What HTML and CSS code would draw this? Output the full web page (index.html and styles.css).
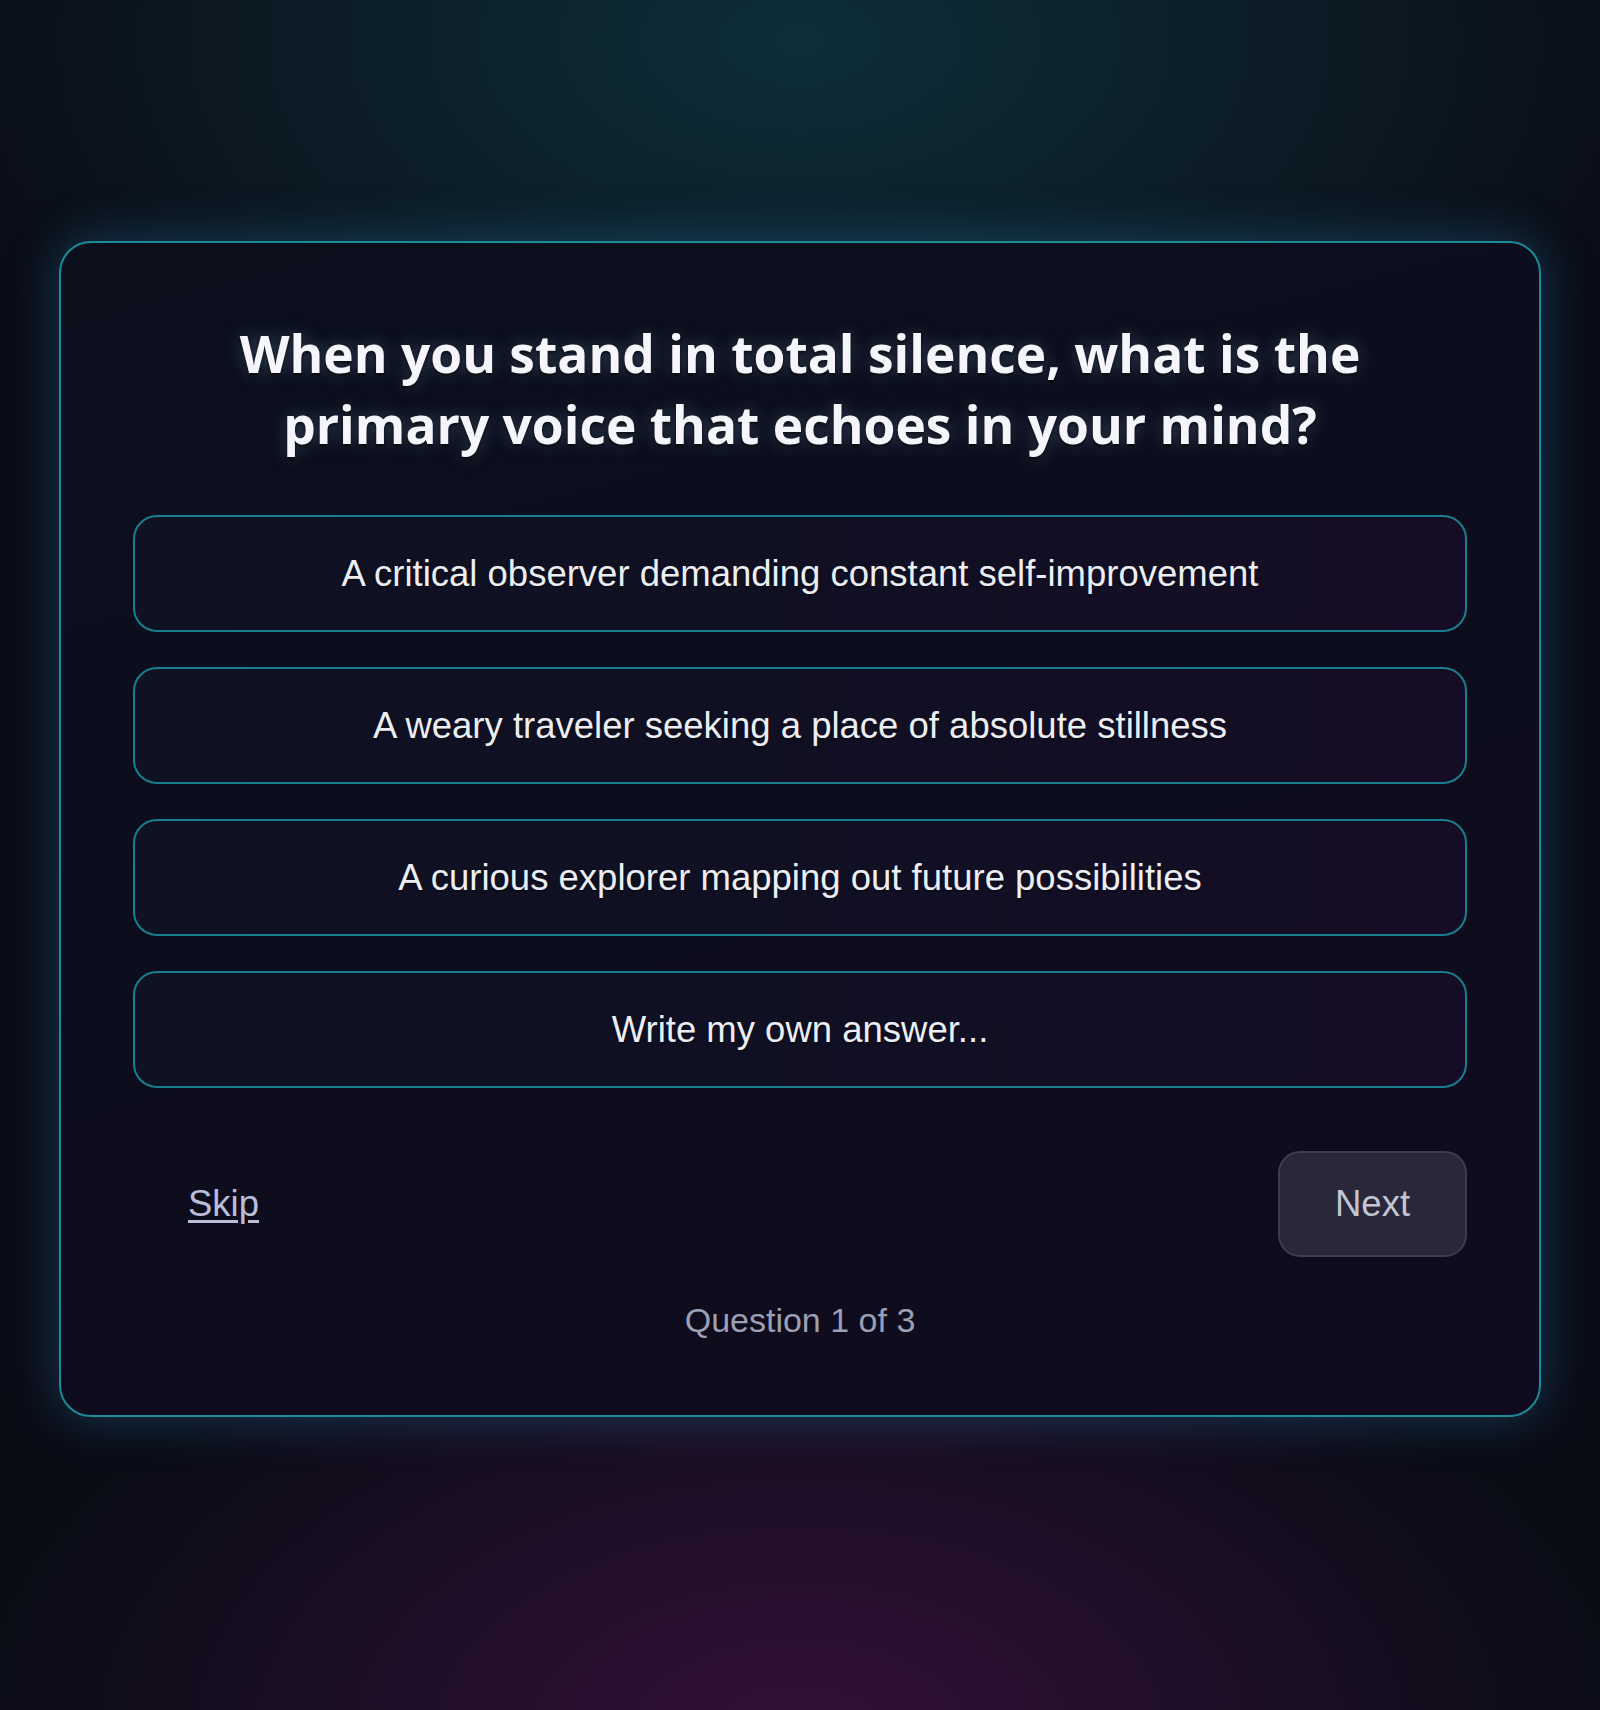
FILE: index.html
```html
<!DOCTYPE html>
<html lang="en">
<head>
  <meta charset="UTF-8" />
  <meta name="viewport" content="width=device-width, initial-scale=1.0"/>
  <title>Inner Voice - Question 1</title>

  <link rel="stylesheet" href="styles.css">

</head>
<body>
  <div class="quiz-card">
    <h1 class="question">When you stand in total silence, what is the primary voice that echoes in your mind?</h1>

    <div class="options">
      <button class="option">A critical observer demanding constant self-improvement</button>
      <button class="option">A weary traveler seeking a place of absolute stillness</button>
      <button class="option">A curious explorer mapping out future possibilities</button>
      <button class="option">Write my own answer...</button>
    </div>

    <div class="actions">
      <button class="skip">Skip</button>
      <button class="next">Next</button>
    </div>

    <p class="progress">Question <span id="current">1</span> of <span id="total">3</span></p>
  </div>
</body>
</html>
```

FILE: styles.css
```css
html, body {
  margin: 0;
  padding: 0;
}

body {
  min-height: 1710px;
  background:
    radial-gradient(ellipse 900px 520px at 50% 40px, rgba(14, 52, 62, 0.85), transparent),
    radial-gradient(ellipse 820px 480px at 50% 1740px, rgba(54, 16, 58, 0.95), transparent),
    #0a0c16;
  font-family: "Liberation Sans", Arial, sans-serif;
  color: #e6e8f2;
  padding: 241px 59px 0;
  box-sizing: border-box;
}

.quiz-card {
  background: linear-gradient(165deg, #0b0f1c 0%, #0c0d1c 50%, #100b1f 100%);
  border: 2px solid #1a8c99;
  border-radius: 32px;
  padding: 75px 72px 75px;
  box-shadow: 0 0 50px rgba(40, 120, 170, 0.42);
}

.question {
  font-family: "Open Sans", "Noto Sans", sans-serif;
  font-weight: 700;
  font-size: 51.5px;
  line-height: 71px;
  text-align: center;
  color: #f4f6fb;
  max-width: 1180px;
  margin: 0 auto 55px;
  text-shadow: 0 2px 3px rgba(0, 0, 0, 0.6), 0 0 18px rgba(170, 220, 255, 0.25);
}

.options {
  display: flex;
  flex-direction: column;
  gap: 35px;
}

.option {
  height: 117px;
  border: 2px solid #197f8c;
  border-radius: 24px;
  background: linear-gradient(100deg, #0e1222 0%, #110f23 60%, #150d25 100%);
  color: #eceef6;
  font-family: inherit;
  font-size: 36.5px;
  cursor: pointer;
  text-shadow: 0 1px 2px rgba(0, 0, 0, 0.6);
}

.actions {
  display: flex;
  justify-content: space-between;
  align-items: center;
  margin-top: 63px;
}

.skip,
.next {
  height: 106px;
  padding: 0 55px;
  border-radius: 22px;
  font-family: inherit;
  font-size: 36.5px;
  cursor: pointer;
}

.skip {
  background: none;
  border: none;
  color: #b9bdd8;
  text-decoration: underline;
  text-underline-offset: 4px;
}

.next {
  width: 189px;
  background: #29283a;
  border: 2px solid #3d3c50;
  color: #c4c5d3;
}

.progress {
  margin: 44px 0 0;
  text-align: center;
  font-size: 34px;
  color: #9d9fb3;
}
```
